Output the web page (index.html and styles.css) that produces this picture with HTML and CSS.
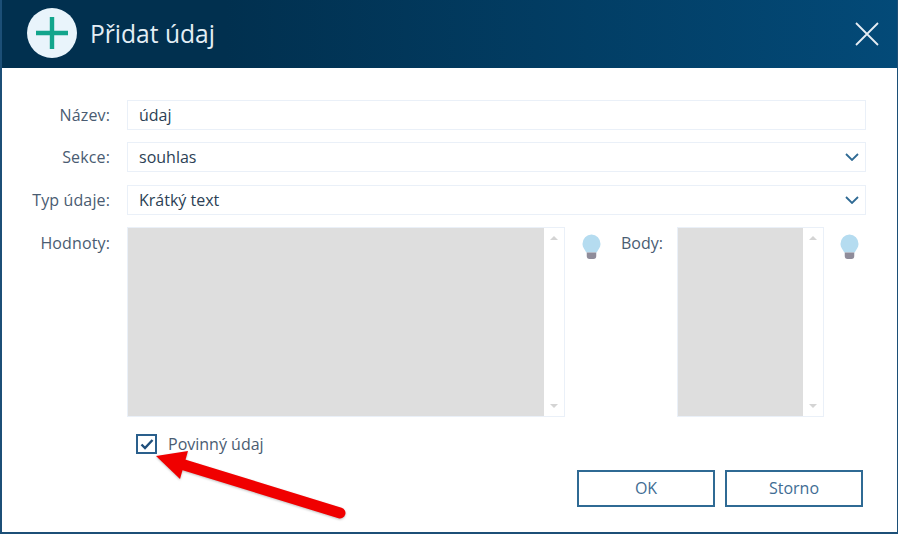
FILE: index.html
```html
<!DOCTYPE html>
<html lang="cs">
<head>
<meta charset="utf-8">
<title>Přidat údaj</title>
<link rel="stylesheet" href="styles.css">
</head>
<body>
<div class="dialog">
  <header class="head">
    <div class="logo">
      <svg width="50" height="50" viewBox="0 0 50 50"><circle cx="25" cy="25" r="25" fill="#e9f4fb"/><path d="M25 9v32M9 25h32" stroke="#12a58c" stroke-width="4.4"/></svg>
    </div>
    <div class="title">Přidat údaj</div>
    <svg class="close" width="24" height="24" viewBox="0 0 24 24"><path d="M1 1l22 22M23 1L1 23" stroke="#e6edf3" stroke-width="1.800" fill="none"/></svg>
  </header>
  <main class="body">
    <div class="row">
      <label class="lab">Název:</label>
      <div class="field">údaj</div>
    </div>
    <div class="row">
      <label class="lab">Sekce:</label>
      <div class="field select">souhlas
        <svg class="chev" width="14" height="8" viewBox="0 0 14 8"><path d="M1 1l6 6 6-6" stroke="#2f6a94" stroke-width="1.800" fill="none"/></svg>
      </div>
    </div>
    <div class="row">
      <label class="lab">Typ údaje:</label>
      <div class="field select">Krátký text
        <svg class="chev" width="14" height="8" viewBox="0 0 14 8"><path d="M1 1l6 6 6-6" stroke="#2f6a94" stroke-width="1.800" fill="none"/></svg>
      </div>
    </div>
    <div class="row areas">
      <label class="lab top">Hodnoty:</label>
      <div class="list wide">
        <div class="fill"></div>
        <div class="scroll"><i class="up"></i><i class="down"></i></div>
      </div>
      <svg class="bulb" width="19" height="26" viewBox="0 0 20 26" preserveAspectRatio="none"><path d="M10 0.500a9.500 9.500 0 0 1 9.500 9.500c0 3.500-2.700 5.500-4 8.500H4.500C3.200 15.500 0.500 13.500 0.500 10a9.500 9.500 0 0 1 9.500-9.500z" fill="#b5dcf0"/><path d="M5 18.500h10v3.500a3 3 0 0 1-3 3H8a3 3 0 0 1-3-3z" fill="#8f8c9a"/></svg>
      <label class="lab2 top">Body:</label>
      <div class="list narrow">
        <div class="fill"></div>
        <div class="scroll"><i class="up"></i><i class="down"></i></div>
      </div>
      <svg class="bulb b2" width="19" height="26" viewBox="0 0 20 26" preserveAspectRatio="none"><path d="M10 0.500a9.500 9.500 0 0 1 9.500 9.500c0 3.500-2.700 5.500-4 8.500H4.500C3.200 15.500 0.500 13.500 0.500 10a9.500 9.500 0 0 1 9.500-9.500z" fill="#b5dcf0"/><path d="M5 18.500h10v3.500a3 3 0 0 1-3 3H8a3 3 0 0 1-3-3z" fill="#8f8c9a"/></svg>
    </div>
    <div class="check">
      <span class="box"><svg width="14" height="12" viewBox="0 0 14 12"><path d="M1.500 6.500l3.500 3.500 7.500-8" stroke="#1f4f7c" stroke-width="2.400" fill="none"/></svg></span>
      <span class="chk-text">Povinný údaj</span>
    </div>
    <div class="actions">
      <button class="btn">OK</button>
      <button class="btn">Storno</button>
    </div>
  </main>
  <svg class="arrow" width="230" height="90" viewBox="0 0 230 90"><path d="M55 23L214 72" stroke="#f00000" stroke-width="11" stroke-linecap="round"/><path d="M30 15L62 10 54 38z" fill="#f00000"/></svg>
</div>
</body>
</html>
```
FILE: styles.css
```css
* { box-sizing: border-box; }
html, body { margin: 0; padding: 0; background: #fff; }
body { width: 898px; height: 534px; overflow: hidden; font-family: "Open Sans", "Noto Sans", sans-serif; font-size: 16px; color: #4a5c72; }
.dialog { position: relative; width: 898px; height: 534px; display: flex; flex-direction: column; border-left: 2px solid #1c4f77; border-right: 1px solid #1c4f77; border-bottom: 2px solid #1c4f77; }
.head { height: 68px; flex: none; display: flex; align-items: center; background: linear-gradient(90deg, #01304f 0%, #01304f 25%, #034a78 100%); padding: 0 18px 2px 25px; }
.logo { width: 50px; height: 50px; flex: none; }
.title { margin-left: 13px; font-size: 24.600px; color: #e4eef5; flex: 1; }
.close { flex: none; margin-top: 2px; }
.body { flex: 1; padding: 32px 31px 0 0; display: flex; flex-direction: column; }
.row { display: flex; align-items: center; height: 30px; margin-bottom: 12.330px; }
.lab { width: 108px; text-align: right; flex: none; margin-right: 17px; letter-spacing: 0.13px; }
.field { position: relative; flex: 1; height: 30px; border: 1px solid #eaf0f8; padding: 0 11px; line-height: 28px; color: #2c3f55; }
.chev { position: absolute; right: 6px; top: 10px; }
.areas { height: 190px; align-items: flex-start; margin-bottom: 0; }
.top { padding-top: 5px; }
.list { height: 190px; display: flex; border: 1px solid #eaf0f8; flex: none; }
.wide { width: 438px; }
.narrow { width: 147px; }
.fill { flex: 1; background: #dedede; }
.scroll { width: 20px; flex: none; display: flex; flex-direction: column; justify-content: space-between; align-items: center; padding: 8px 0; }
.up { width: 0; height: 0; border: 4px solid transparent; border-top: 0; border-bottom: 4px solid #d4d4d4; }
.down { width: 0; height: 0; border: 4px solid transparent; border-bottom: 0; border-top: 4px solid #d4d4d4; }
.bulb { flex: none; margin: 7px 0 0 17px; }
.b2 { margin-left: 16px; }
.lab2 { flex: none; width: 44px; margin: 0 12px 0 20px; }
.check { display: flex; align-items: center; margin: 17px 0 0 134px; height: 20px; }
.box { width: 21px; height: 20px; border: 2px solid #2a5f8c; display: flex; align-items: center; justify-content: center; background: #fff; flex: none; }
.chk-text { margin-left: 11px; }
.actions { display: flex; justify-content: flex-end; gap: 10px; margin: 16px 3px 0 0; }
.btn { width: 138px; height: 37px; background: #fff; border: 2px solid #2f6a94; border-radius: 0; font: inherit; color: #3f6d94; }
.arrow { position: absolute; left: 124px; top: 441px; filter: drop-shadow(0 1px 1px rgba(0,0,0,.25)); }
```
